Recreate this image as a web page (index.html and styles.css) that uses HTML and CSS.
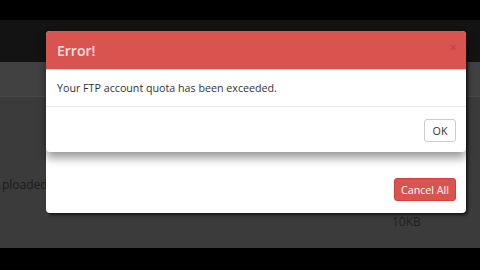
FILE: index.html
```html
<!DOCTYPE html>
<html lang="en">
<head>
    <meta charset="UTF-8">
    <title>Upload - Error</title>
    <link rel="stylesheet" href="styles.css">
</head>
<body>

    <div class="topbar"></div>
    <div class="navbar"></div>

    <div class="content">
        <div class="table-head"></div>
        <div class="row row-name">
            <span class="cell-name">ploaded</span>
        </div>
        <div class="row row-size">
            <span class="cell-size">10KB</span>
        </div>
    </div>

    <div class="footer"></div>

    <!-- upload modal, sits under the error -->
    <div class="modal modal-upload">
        <div class="modal-footer">
            <button class="btn btn-danger">Cancel All</button>
        </div>
    </div>

    <div class="modal modal-error">
        <div class="modal-header">
            <h4>Error!</h4>
            <span class="close">&times;</span>
        </div>
        <div class="modal-body">
            Your FTP account quota has been exceeded.
        </div>
        <div class="modal-footer">
            <button class="btn btn-default">OK</button>
        </div>
    </div>

</body>
</html>
```

FILE: styles.css
```css
body {
    margin: 0;
    width: 480px;
    height: 270px;
    overflow: hidden;
    position: relative;
    background-color: #000;
    font-family: "Open Sans", "DejaVu Sans", sans-serif;
}

.topbar {
    height: 20px;
    background-color: #000;
}

.navbar {
    height: 42px;
    background-color: #131313;
}

.content {
    height: 186px;
    background-color: #3b3b3b;
}

.table-head {
    height: 34px;
    background-color: #414141;
    border-bottom: 1px solid #4a4a4a;
}

.row {
    display: flex;
    line-height: 16px;
    font-size: 12px;
}

.row-name {
    padding-top: 80px;
}

.cell-name {
    padding-left: 2px;
    color: #1c1c1c;
}

.row-size {
    padding-top: 21px;
}

.cell-size {
    margin-left: 392px;
    color: #1f1f1f;
}

.footer {
    height: 22px;
    background-color: #000;
}

.modal {
    position: absolute;
    left: 46px;
    width: 420px;
    background-color: #fff;
    border-radius: 4px;
    box-sizing: border-box;
}

.modal-upload {
    top: 40px;
    height: 173px;
    display: flex;
    flex-direction: column;
    justify-content: flex-end;
    box-shadow: 2px 2px 3px rgba(0, 0, 0, 0.6);
}

.modal-error {
    top: 31px;
    height: 121px;
    overflow: hidden;
    box-shadow: 0 6px 10px rgba(0, 0, 0, 0.4);
}

.modal-header {
    height: 38px;
    background-color: #d9534f;
    display: flex;
    align-items: center;
    justify-content: space-between;
    padding: 0 11px;
    border-bottom: 1px solid #f0c6c4;
}

.modal-header h4 {
    margin: 0;
    font-size: 14px;
    font-weight: 600;
    color: #fbe3e2;
}

.close {
    font-size: 13px;
    color: #b94440;
    margin-top: -6px;
    margin-right: -2px;
}

.modal-body {
    height: 37px;
    box-sizing: border-box;
    padding: 0 11px;
    display: flex;
    align-items: center;
    font-size: 10.7px;
    color: #333;
    border-bottom: 1px solid #e8e8e8;
}

.modal-footer {
    display: flex;
    justify-content: flex-end;
    padding: 12px 10px;
}

.btn {
    font-family: "Open Sans", "DejaVu Sans", sans-serif;
    font-size: 10.7px;
    height: 23px;
    border-radius: 3px;
    padding: 0;
    cursor: pointer;
}

.btn-default {
    width: 32px;
    background-color: #fff;
    color: #333;
    border: 1px solid #ccc;
}

.btn-danger {
    width: 62px;
    background-color: #d9534f;
    color: #fff;
    border: 1px solid #d43f3a;
}
```
